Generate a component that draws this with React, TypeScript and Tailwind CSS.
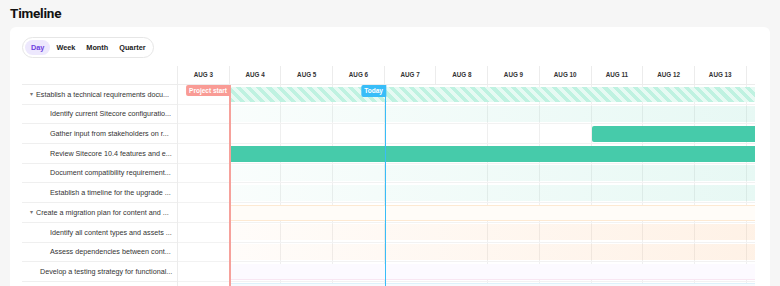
import React from "react";

const dates = ["AUG 3", "AUG 4", "AUG 5", "AUG 6", "AUG 7", "AUG 8", "AUG 9", "AUG 10", "AUG 11", "AUG 12", "AUG 13", "AUG 14"];

type Kind = "stripe" | "mint" | "teal" | "tealLate" | "orangeOutline" | "peach" | "lavender" | "blue";
type Row = { label: string; indent: string; caret?: boolean; bar: Kind };

const rows: Row[] = [
  { label: "Establish a technical requirements docu...", indent: "pl-[8px]", caret: true, bar: "stripe" },
  { label: "Identify current Sitecore configuratio...", indent: "pl-[28px]", bar: "mint" },
  { label: "Gather input from stakeholders on r...", indent: "pl-[28px]", bar: "tealLate" },
  { label: "Review Sitecore 10.4 features and e...", indent: "pl-[28px]", bar: "teal" },
  { label: "Document compatibility requirement...", indent: "pl-[28px]", bar: "mint" },
  { label: "Establish a timeline for the upgrade ...", indent: "pl-[28px]", bar: "mint" },
  { label: "Create a migration plan for content and ...", indent: "pl-[8px]", caret: true, bar: "orangeOutline" },
  { label: "Identify all content types and assets ...", indent: "pl-[28px]", bar: "peach" },
  { label: "Assess dependencies between cont...", indent: "pl-[28px]", bar: "peach" },
  { label: "Develop a testing strategy for functional...", indent: "pl-[18px]", bar: "lavender" },
  { label: "", indent: "pl-[28px]", bar: "blue" },
];

const barClass: Record<Kind, string> = {
  stripe:
    "ml-[51.7px] h-[15.5px] bg-[image:repeating-linear-gradient(45deg,#bff2e1_0px,#bff2e1_3.6px,#e6faf3_3.6px,#e6faf3_7.2px)]",
  mint: "ml-[51.7px] h-[16px] bg-[image:linear-gradient(90deg,rgba(70,203,170,0.03),rgba(70,203,170,0.13))]",
  teal: "ml-[51.7px] h-[16px] bg-[#46cbaa]",
  tealLate: "ml-[413.6px] h-[16px] rounded-l-[2px] bg-[#46cbaa]",
  orangeOutline: "ml-[51.7px] h-[16px] border-y border-[#fde9d2] bg-[#fffcf8]",
  peach: "ml-[51.7px] h-[16px] bg-[image:linear-gradient(90deg,rgba(251,160,80,0.03),rgba(251,160,80,0.14))]",
  lavender: "ml-[51.7px] h-[16px] border-b border-[#f8e6f2] bg-[#fcfaff]",
  blue: "ml-[51.7px] h-[16px] border-t border-[#dff1fb] bg-[#f6fbfe]",
};

export default function App() {
  return (
    <div className="w-[780px] h-[286px] overflow-hidden bg-[#f6f6f6] font-['Liberation_Sans',Arial,sans-serif] text-[#333]">
      <div className="px-[10px] pt-[3px] h-[27px] text-[13.5px] leading-[20px] font-bold text-[#111] font-['Roboto',sans-serif] tracking-[-0.2px]">
        Timeline
      </div>
      <div className="mx-[10px] rounded-md bg-white px-3 pt-[10px] h-[300px] flex flex-col items-start">
        <div className="flex items-center h-[21px] rounded-full border border-[#e6e6e6] px-[2px] gap-[1px]">
          <span className="h-[15px] px-[6px] rounded-full bg-[#ede8fd] text-[#6d3fe0] text-[7.3px] font-bold leading-[15px]">Day</span>
          <span className="h-[15px] px-[5px] text-[#222] text-[7.3px] font-bold leading-[15px]">Week</span>
          <span className="h-[15px] px-[5px] text-[#222] text-[7.3px] font-bold leading-[15px]">Month</span>
          <span className="h-[15px] px-[5px] text-[#222] text-[7.3px] font-bold leading-[15px]">Quarter</span>
        </div>
        <div className="mt-[8px] flex">
          {/* label column */}
          <div className="w-[156px] shrink-0 border-r border-[#ececec]">
            <div className="h-[19px] border-b border-[#ececec]" />
            {rows.map((r, i) => (
              <div
                key={i}
                className={`h-[19.7px] border-b border-[#efefef] flex items-center text-[7.2px] leading-none text-[#333] whitespace-nowrap overflow-hidden ${r.indent}`}
              >
                {r.caret && <span className="mr-[3px] text-[6px] text-[#777]">▾</span>}
                {r.label}
              </div>
            ))}
          </div>
          {/* chart */}
          <div className="w-[577px] shrink-0 overflow-hidden">
            <div className="flex h-[19px] border-b border-[#ececec]">
              {dates.map((d) => (
                <div
                  key={d}
                  className="w-[51.7px] shrink-0 border-r border-[#ececec] flex items-center justify-center text-[6.3px] font-bold text-[#333]"
                >
                  {d}
                </div>
              ))}
            </div>
            <div className="relative">
              {rows.map((r, i) => (
                <div
                  key={i}
                  className="h-[19.7px] border-b border-[#f2f2f2] flex items-start pt-[1.5px] bg-[image:repeating-linear-gradient(90deg,transparent_0px,transparent_50.7px,#efefef_50.7px,#efefef_51.7px)]"
                >
                  <div className={`flex-1 ${barClass[r.bar]}`} />
                </div>
              ))}
              {/* project start marker */}
              <div className="absolute top-0 bottom-0 left-[51px] w-[1.5px] bg-[#f6a19b]" />
              <div className="absolute top-0 left-[52px] -translate-x-full h-[11px] px-[3px] rounded-l-[2px] bg-[#f99b95] text-white text-[6.5px] font-bold leading-[11px] whitespace-nowrap">
                Project start
              </div>
              {/* today marker */}
              <div className="absolute top-0 bottom-0 left-[206.5px] w-[1.5px] bg-[#38bdf8]" />
              <div className="absolute top-0 left-[208px] -translate-x-full h-[11.5px] px-[3px] rounded-l-[2px] bg-[#38bdf8] text-white text-[6.5px] font-bold leading-[11.5px] whitespace-nowrap">
                Today
              </div>
            </div>
          </div>
        </div>
      </div>
    </div>
  );
}
